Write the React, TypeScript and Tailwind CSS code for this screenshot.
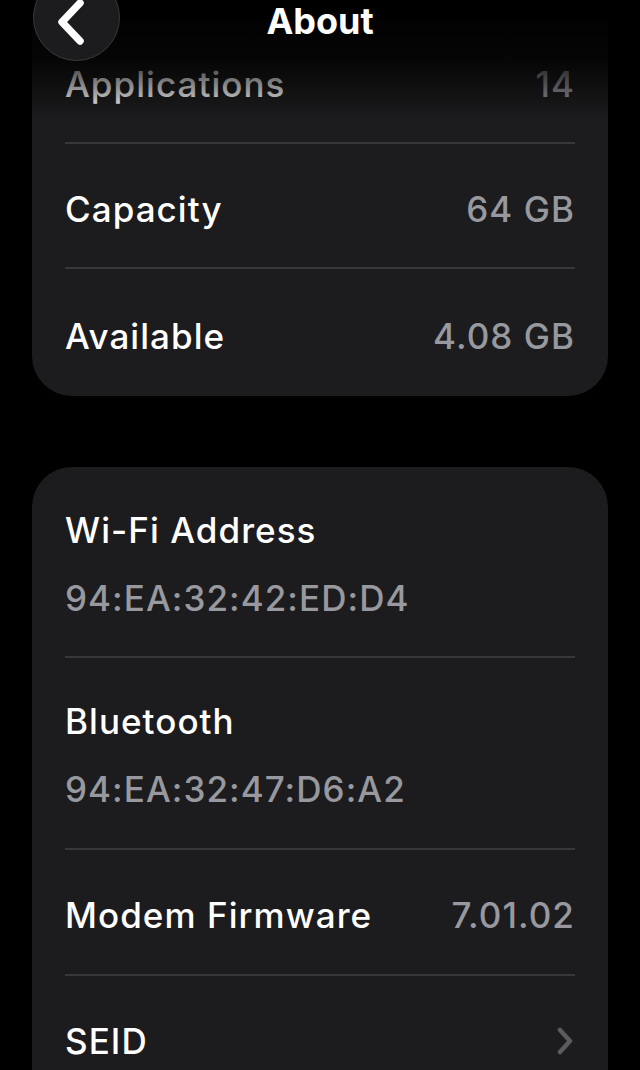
export default function App() {
  const storage = [
    { label: "Applications", value: "14" },
    { label: "Capacity", value: "64 GB" },
    { label: "Available", value: "4.08 GB" },
  ];

  const text = "text-[35px] font-medium tracking-[0.03em]";

  return (
    <div
      className="relative w-[640px] h-[1070px] overflow-hidden bg-black text-white"
      style={{ fontFamily: "Inter, 'Liberation Sans', sans-serif" }}
    >
      {/* HEADER */}
      <div className="absolute top-0 left-0 right-0 h-[120px] z-10 bg-gradient-to-b from-black via-black/80 to-transparent pointer-events-none" />
      <div className="absolute top-[-26px] left-[33px] z-20 w-[87px] h-[87px] rounded-full bg-[#1c1c1e] border border-[#3a3a3c] flex items-center justify-center">
        <svg width="34" height="46" viewBox="0 0 34 46" className="mt-[8px] -ml-[12px]">
          <path d="M26 4 L8 23 L26 42" fill="none" stroke="white" strokeWidth="7.5" strokeLinecap="round" strokeLinejoin="round" />
        </svg>
      </div>
      <div className="absolute top-[1px] left-0 right-0 z-20 flex justify-center">
        <h1 className="text-[36px] font-bold leading-[40px]">About</h1>
      </div>

      <div className="flex flex-col gap-[71px] px-[32px] pt-[19px]">
        {/* STORAGE */}
        <div className="bg-[#1c1c1e] rounded-b-[40px] px-[33px]">
          {storage.map((row, i) => (
            <div
              key={row.label}
              className={`flex items-center justify-between pt-[7px] ${
                i < storage.length - 1 ? "h-[125px] border-b-2 border-[#38383a]" : "h-[127px]"
              }`}
            >
              <span className={text}>{row.label}</span>
              <span className={`${text} text-[#98989f]`}>{row.value}</span>
            </div>
          ))}
        </div>

        {/* ADDRESSES */}
        <div className="bg-[#1c1c1e] rounded-t-[40px] px-[33px]">
          <div className="flex flex-col justify-center h-[191px] border-b-2 border-[#38383a] gap-[28px] pt-[4px]">
            <span className={`${text} leading-[40px]`}>Wi-Fi Address</span>
            <span className={`${text} leading-[40px] text-[#98989f]`}>94:EA:32:42:ED:D4</span>
          </div>
          <div className="flex flex-col justify-center h-[192px] border-b-2 border-[#38383a] gap-[28px] pt-[4px]">
            <span className={`${text} leading-[40px]`}>Bluetooth</span>
            <span className={`${text} leading-[40px] text-[#98989f]`}>94:EA:32:47:D6:A2</span>
          </div>
          <div className="flex items-center justify-between h-[126px] border-b-2 border-[#38383a] pt-[6px]">
            <span className={text}>Modem Firmware</span>
            <span className={`${text} text-[#98989f]`}>7.01.02</span>
          </div>
          <div className="flex items-center justify-between h-[130px]">
            <span className={text}>SEID</span>
            <svg width="16" height="28" viewBox="0 0 16 28" className="mr-[2px]">
              <path d="M3 3 L13 14 L3 25" fill="none" stroke="#5a5a5f" strokeWidth="4.5" strokeLinecap="round" strokeLinejoin="round" />
            </svg>
          </div>
        </div>
      </div>
    </div>
  );
}
